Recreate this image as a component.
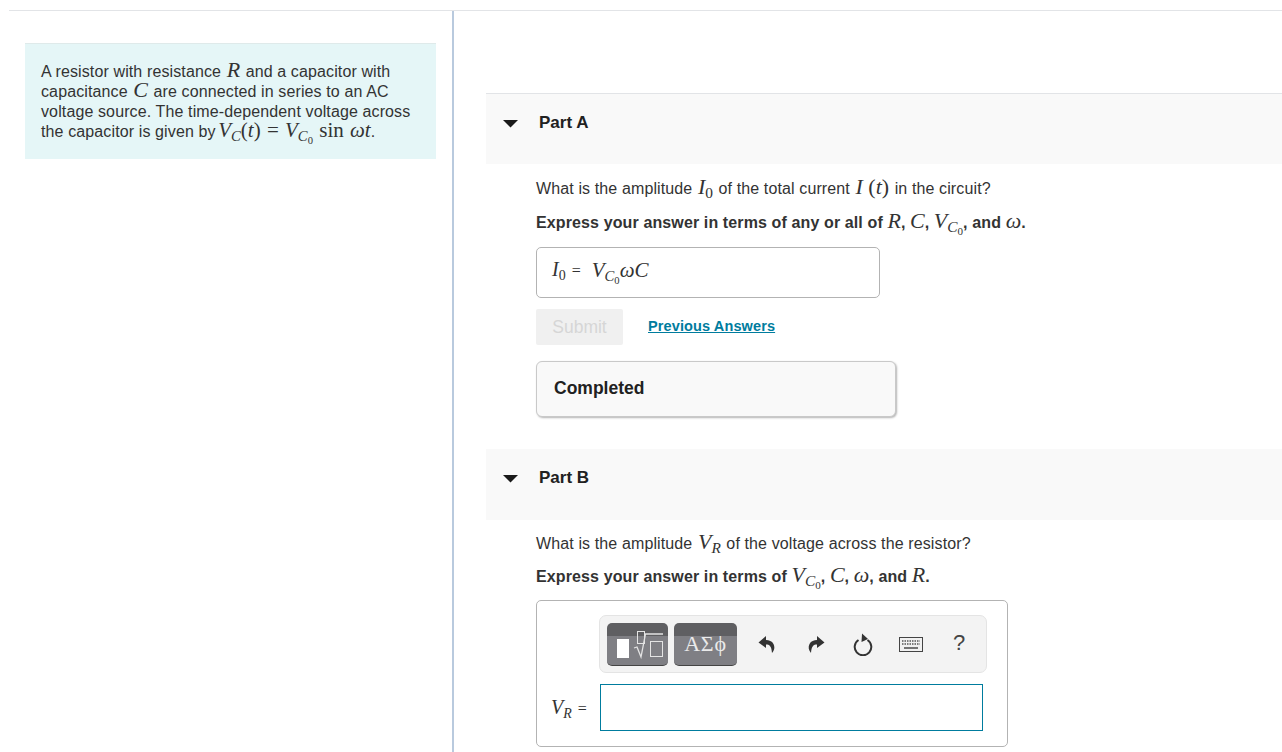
<div class="page">
  <div class="columns">
    <aside class="left">
      <div class="intro">
        A resistor with resistance <span class="m big"><i>R</i></span> and a capacitor with<br />
        capacitance <span class="m big"><i>C</i></span> are connected in series to an AC<br />
        voltage source. The time-dependent voltage across<br />
        the capacitor is given by <span class="m big long"><i>V</i><sub class="s1"><i>C</i></sub>(<i>t</i>) = <i>V</i><sub class="s1"><i>C</i><sub class="s2">0</sub></sub> sin <i>ωt</i></span>.
      </div>
    </aside>

    <main class="right">
      <section class="part-a">
        <header class="part-head">
          <svg class="caret" width="16" height="8" viewBox="0 0 16 8"><path d="M0 0H15L7.500 7.500Z" fill="#1a1a1a" /></svg>
          <h2>Part A</h2>
        </header>
        <div class="body">
          <p class="q">What is the amplitude <span class="m big"><i>I</i><sub class="s1">0</sub></span> of the total current <span class="m big"><i>I</i> (<i>t</i>)</span> in the circuit?</p>
          <p class="ex">Express your answer in terms of any or all of <span class="m big"><i>R</i></span>, <span class="m big"><i>C</i></span>, <span class="m big"><i>V</i><sub class="s1"><i>C</i><sub class="s2">0</sub></sub></span>, and <span class="m big"><i>ω</i></span>.</p>
          <div class="answer">
            <span class="m lbl"><i>I</i><sub class="s1">0</sub> <span class="eq">=</span></span>
            <span class="m val"><i>V</i><sub class="s1"><i>C</i><sub class="s2">0</sub></sub><i>ωC</i></span>
          </div>
          <div class="actions">
            <button class="submit" disabled>Submit</button>
            <a class="prev" href="#prev">Previous Answers</a>
          </div>
          <div class="completed">Completed</div>
        </div>
      </section>

      <section class="part-b">
        <header class="part-head">
          <svg class="caret" width="16" height="8" viewBox="0 0 16 8"><path d="M0 0H15L7.500 7.500Z" fill="#1a1a1a" /></svg>
          <h2>Part B</h2>
        </header>
        <div class="body">
          <p class="q">What is the amplitude <span class="m big"><i>V</i><sub class="s1"><i>R</i></sub></span> of the voltage across the resistor?</p>
          <p class="ex">Express your answer in terms of <span class="m big"><i>V</i><sub class="s1"><i>C</i><sub class="s2">0</sub></sub></span>, <span class="m big"><i>C</i></span>, <span class="m big"><i>ω</i></span>, and <span class="m big"><i>R</i></span>.</p>
          <div class="editor">
            <div class="toolbar">
              <button class="tb tb1" aria-label="Templates">
                <svg width="61" height="43" viewBox="0 0 61 43">
                  <rect x="10" y="16" width="12" height="19" fill="#fff" />
                  <g fill="none" stroke="#e4e4e4" stroke-width="1">
                    <rect x="30.500" y="8.500" width="7" height="12" />
                    <path d="M27 25l3-1 4 10 4.500-23h17.500" stroke-width="1.300" />
                    <rect x="43.500" y="18.500" width="12" height="15" />
                  </g>
                </svg>
              </button>
              <button class="tb tb2">ΑΣϕ</button>
              <div class="tools">
                <svg width="18" height="19" viewBox="0 0 18 19"><path d="M8 1 0.500 7.500 8 13V9.500c3.500 0 5.500 1.500 6 8.500 2.500-3 3-6 1.500-9C14 6 11 5 8 5Z" fill="#333" /></svg>
                <svg width="18" height="19" viewBox="0 0 18 19"><path d="M10 1 17.500 7.500 10 13V9.500c-3.500 0-5.500 1.500-6 8.500-2.500-3-3-6-1.500-9C4 6 7 5 10 5Z" fill="#333" /></svg>
                <svg width="22" height="24" viewBox="0 0 22 24"><path d="M6.500 8a8.300 8.300 0 1 0 9 0" fill="none" stroke="#333" stroke-width="2" /><path d="M10 1.500 16 7 9.500 10Z" fill="#333" /></svg>
                <svg width="24" height="15" viewBox="0 0 24 15">
                  <rect x="0.500" y="0.500" width="23" height="14" fill="#f1f1f1" stroke="#444" />
                  <path d="M3 4h18M3 7h18" stroke="#555" stroke-width="1.600" stroke-dasharray="1.500 1" fill="none" />
                  <path d="M5 11h14" stroke="#555" stroke-width="1.600" fill="none" />
                </svg>
                <span class="help">?</span>
              </div>
            </div>
            <div class="entry">
              <span class="m lbl2"><i>V</i><sub class="s1"><i>R</i></sub> <span class="eq">=</span></span>
              <div class="input"></div>
            </div>
          </div>
        </div>
      </section>
    </main>
  </div>
</div>

<style>
  :global(body) { margin: 0; background: #fff; }
  .page {
    height: 752px;
    box-sizing: border-box;
    padding: 10px 0 0 9px;
    overflow: hidden;
    font-family: "Liberation Sans", Arial, sans-serif;
    font-size: 16px;
    line-height: 20px;
    letter-spacing: 0.12px;
    color: #333;
  }
  .columns {
    display: grid;
    grid-template-columns: 445px 1fr;
    height: 742px;
    border-top: 1px solid #e2e4e7;
  }
  .left {
    border-right: 2px solid #b9cade;
    padding: 32px 16px 0 16px;
    box-sizing: border-box;
  }
  .intro {
    background: #e5f6f7;
    border-top: 1px solid #dfeaea;
    padding: 18px 0 17px 16px;
    width: 411px;
    box-sizing: border-box;
    white-space: nowrap;
  }
  .right { padding: 82px 0 0 32px; min-width: 0; }
  .m { font-family: "Liberation Serif", "Times New Roman", serif; white-space: nowrap; letter-spacing: 0; }
  .big { font-size: 22px; line-height: 0; padding: 0 1px; }
  .long { font-size: 21px; padding: 0; margin-left: -2px; word-spacing: 1px; }
  .m i { font-style: italic; }
  .s1 { font-size: 0.7em; line-height: 0; vertical-align: -0.25em; }
  .s2 { font-size: 0.72em; line-height: 0; vertical-align: -0.25em; }
  .part-head {
    height: 71px;
    box-sizing: border-box;
    background: #f9f9f9;
    border-top: 1px solid #e2e4e7;
    display: flex;
    align-items: flex-start;
    padding: 19px 0 0 17px;
  }
  .part-b .part-head { border-top: 0; padding-top: 19px; }
  .caret { margin-top: 7px; flex: none; }
  h2 { margin: 0 0 0 20px; font-size: 17px; line-height: 20px; font-weight: 700; color: #212121; letter-spacing: 0; }
  .body { padding: 15px 0 0 50px; }
  p { margin: 0; white-space: nowrap; }
  .q { height: 20px; }
  .ex { margin-top: 14px; font-weight: 700; height: 20px; }
  .ex .m { font-weight: 400; padding: 0; }
  .answer {
    margin-top: 14px;
    width: 344px;
    height: 51px;
    box-sizing: border-box;
    border: 1px solid #b3b3b3;
    border-radius: 5px;
    display: flex;
    align-items: center;
    padding: 0 0 5px 15px;
    font-size: 21px;
  }
  .lbl { font-size: 20px; }
  .eq { font-size: 16px; margin-left: 1px; }
  .val { margin-left: 11px; font-size: 21px; }
  .actions { margin-top: 11px; display: flex; align-items: center; height: 36px; }
  .submit {
    width: 87px;
    height: 36px;
    border: 0;
    border-radius: 2px;
    background: #f0f0f0;
    color: #d6d6d6;
    font: 400 17.500px/20px "Liberation Sans", Arial, sans-serif;
    padding: 0;
  }
  .prev {
    margin-left: 25px;
    color: #007c9e;
    font-size: 14.500px;
    font-weight: 700;
    text-decoration: underline;
    margin-top: -2px;
  }
  .completed {
    margin-top: 16px;
    width: 360px;
    height: 56px;
    box-sizing: border-box;
    background: #f9f9f9;
    border: 1px solid #c9c9c9;
    border-radius: 6px;
    box-shadow: 1px 1px 2px #b5b5b5;
    padding: 0 17px 2px;
    display: flex;
    align-items: center;
    font-size: 17.500px;
    letter-spacing: 0;
    font-weight: 700;
    color: #212121;
  }
  .part-a { height: 356px; }
  .part-b .body { padding-top: 14px; }
  .part-b .ex { margin-top: 13px; }
  .editor {
    margin-top: 13px;
    width: 472px;
    height: 147px;
    box-sizing: border-box;
    border: 1px solid #b3b3b3;
    border-radius: 5px;
    padding: 14px 20px 0 62px;
  }
  .toolbar {
    height: 58px;
    box-sizing: border-box;
    background: #f3f3f3;
    border: 1px solid #e4e4e4;
    border-radius: 7px;
    display: flex;
    align-items: center;
    padding: 0 0 0 7px;
    gap: 6px;
  }
  .tb {
    height: 43px;
    padding: 0;
    border: 0;
    border-bottom: 1px solid #444;
    border-radius: 5px;
    background: linear-gradient(#5f5f62 0 32%, #7f7f84 32% 100%);
    color: #eaeaea;
    font: 400 22px/42px "Liberation Serif", serif;
    letter-spacing: 0.8px;
    box-sizing: border-box;
  }
  .tb svg { display: block; }
  .tb1 { width: 61px; }
  .tb2 { width: 63px; }
  .tools { display: flex; align-items: center; margin-left: 15px; }
  .tools svg:nth-child(1) { margin-right: 31px; }
  .tools svg:nth-child(2) { margin-right: 27px; }
  .tools svg:nth-child(3) { margin-right: 25px; }
  .tools svg:nth-child(4) { margin-right: 30px; }
  .help { font-size: 22px; color: #444; margin-top: -3px; }
  .entry { display: flex; align-items: center; margin-top: 11px; }
  .lbl2 { margin-left: -62px; padding-left: 14px; width: 63px; box-sizing: border-box; font-size: 20px; flex: none; }
  .input { flex: none; width: 383px; height: 47px; box-sizing: border-box; border: 1px solid #007c9e; background: #fff; }
</style>
